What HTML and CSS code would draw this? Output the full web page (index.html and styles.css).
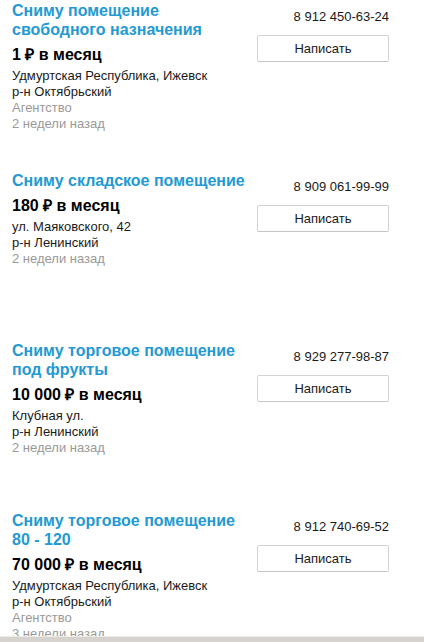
FILE: index.html
```html
<!DOCTYPE html>
<html>
<head>
  <meta charset="UTF-8" />
  <title>Объявления</title>
  <link rel="stylesheet" href="styles.css">
</head>
<body>
  <!-- Ad list -->
  <div id="adList">
    <div class="ad-item">
      <div class="ad-info">
        <a class="ad-title" href="#">Сниму помещение свободного назначения</a>
        <div class="ad-price">1 ₽ в месяц</div>
        <div class="ad-line">Удмуртская Республика, Ижевск</div>
        <div class="ad-line">р-н Октябрьский</div>
        <div class="ad-line muted">Агентство</div>
        <div class="ad-line muted">2 недели назад</div>
      </div>
      <div class="ad-side">
        <div class="ad-phone">8 912 450-63-24</div>
        <button class="write-btn">Написать</button>
      </div>
    </div>

    <div class="ad-item">
      <div class="ad-info">
        <a class="ad-title" href="#">Сниму складское помещение</a>
        <div class="ad-price">180 ₽ в месяц</div>
        <div class="ad-line">ул. Маяковского, 42</div>
        <div class="ad-line">р-н Ленинский</div>
        <div class="ad-line muted">2 недели назад</div>
      </div>
      <div class="ad-side">
        <div class="ad-phone">8 909 061-99-99</div>
        <button class="write-btn">Написать</button>
      </div>
    </div>

    <div class="ad-item">
      <div class="ad-info">
        <a class="ad-title" href="#">Сниму торговое помещение под фрукты</a>
        <div class="ad-price">10 000 ₽ в месяц</div>
        <div class="ad-line">Клубная ул.</div>
        <div class="ad-line">р-н Ленинский</div>
        <div class="ad-line muted">2 недели назад</div>
      </div>
      <div class="ad-side">
        <div class="ad-phone">8 929 277-98-87</div>
        <button class="write-btn">Написать</button>
      </div>
    </div>

    <div class="ad-item">
      <div class="ad-info">
        <a class="ad-title" href="#">Сниму торговое помещение 80 - 120</a>
        <div class="ad-price">70 000 ₽ в месяц</div>
        <div class="ad-line">Удмуртская Республика, Ижевск</div>
        <div class="ad-line">р-н Октябрьский</div>
        <div class="ad-line muted">Агентство</div>
        <div class="ad-line muted">3 недели назад</div>
      </div>
      <div class="ad-side">
        <div class="ad-phone">8 912 740-69-52</div>
        <button class="write-btn">Написать</button>
      </div>
    </div>
  </div>

  <!-- Window frame edge at the bottom -->
  <div id="frameBottom"></div>
</body>
</html>
```

FILE: styles.css
```css
/* Global reset & fonts */
* {
  margin: 0;
  padding: 0;
  box-sizing: border-box;
}
body {
  font-family: 'Liberation Sans', Arial, sans-serif;
  background-color: #ffffff;
  color: #1a1a1a;
  height: 642px;
  overflow: hidden;
}

/* Ad list */
#adList {
  padding-top: 1px;
}
.ad-item {
  height: 170px;
  display: flex;
  justify-content: space-between;
  padding: 0 35px 0 12px;
}
.ad-info {
  width: 240px;
}
.ad-title {
  display: block;
  font-size: 16px;
  font-weight: bold;
  line-height: 19px;
  color: #2499d2;
  text-decoration: none;
}
.ad-price {
  margin-top: 6px;
  font-size: 16px;
  font-weight: bold;
  line-height: 20px;
  color: #000000;
}
.ad-price + .ad-line {
  margin-top: 3px;
}
.ad-line {
  font-size: 13px;
  line-height: 16px;
}
.ad-line.muted {
  color: #999999;
}

/* Right column: phone + button */
.ad-side {
  width: 132px;
  padding-top: 8px;
  display: flex;
  flex-direction: column;
  align-items: flex-end;
}
.ad-phone {
  font-size: 13px;
  line-height: 16px;
  color: #1a1a1a;
}
.write-btn {
  margin-top: 10px;
  width: 132px;
  height: 27px;
  background: #ffffff;
  border: 1px solid #d3d3d3;
  border-bottom-color: #c4c4c4;
  border-radius: 2px;
  font-family: 'Liberation Sans', Arial, sans-serif;
  font-size: 13px;
  color: #1a1a1a;
  cursor: pointer;
}

/* Bottom frame edge */
#frameBottom {
  position: fixed;
  left: 0;
  right: 0;
  bottom: 0;
  height: 6px;
  background-color: #d6d3ce;
  border-top: 1px solid #ecebe8;
}
```
